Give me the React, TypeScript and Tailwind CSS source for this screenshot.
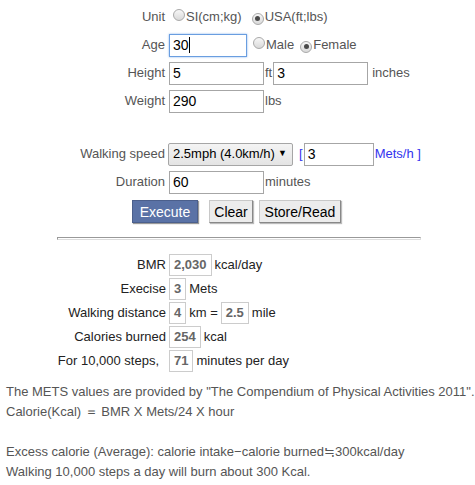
import React from "react";

const FONT = { fontFamily: '"Liberation Sans", Arial, sans-serif' };

function Radio({ checked }: { checked?: boolean }) {
  return (
    <span className="inline-flex items-center justify-center w-[12px] h-[12px] rounded-full border border-[#a9a9a9] bg-gradient-to-b from-[#f7f7f7] to-[#d9d9d9] shrink-0">
      {checked && <span className="w-[5px] h-[5px] rounded-full bg-[#4a4a4a]" />}
    </span>
  );
}

function Field({ value, w, focused }: { value: string; w: string; focused?: boolean }) {
  return (
    <div
      className={`${w} h-[23px] flex items-center px-[3px] bg-white text-[14px] text-black border ${
        focused ? "border-[#6a9ee0] shadow-[0_0_2px_#8ab4ec]" : "border-[#a6a6a6]"
      }`}
    >
      {value}
      {focused && <span className="w-px h-[16px] bg-black" />}
    </div>
  );
}

function Result({ value }: { value: string }) {
  return (
    <span className="h-[22px] flex items-center px-[4px] border border-[#cccccc] font-bold text-[#666]">
      {value}
    </span>
  );
}

function Btn({ children, primary, cls }: { children: React.ReactNode; primary?: boolean; cls: string }) {
  return (
    <button
      className={`h-[23px] text-[14px] leading-none ${cls} ${
        primary
          ? "bg-[#5a72a6] text-white border border-[#4b5f8c] shadow-[1px_1px_1px_#999]"
          : "bg-[#ececec] text-black border border-[#c8c8c8] border-r-[#888] border-b-[#888] shadow-[1px_1px_1px_#bbb]"
      }`}
    >
      {children}
    </button>
  );
}

export default function App() {
  return (
    <div className="w-[475px] h-[485px] bg-white text-[13px] overflow-hidden" style={FONT}>
      {/* input form */}
      <div className="grid grid-cols-[165px_1fr] gap-x-[4px] pt-[3px] text-[#555]">
        <div className="h-[28px] flex items-center justify-end">Unit</div>
        <div className="h-[28px] flex items-center">
          <span className="ml-[4px]"><Radio /></span>
          <span className="ml-[1px]">SI(cm;kg)</span>
          <span className="ml-[10px]"><Radio checked /></span>
          <span className="ml-[1px]">USA(ft;lbs)</span>
        </div>

        <div className="h-[28px] flex items-center justify-end">Age</div>
        <div className="h-[28px] flex items-center">
          <Field value="30" w="w-[78px]" focused />
          <span className="ml-[6px]"><Radio /></span>
          <span className="ml-[1px]">Male</span>
          <span className="ml-[6px]"><Radio checked /></span>
          <span className="ml-[1px]">Female</span>
        </div>

        <div className="h-[28px] flex items-center justify-end">Height</div>
        <div className="h-[28px] flex items-center">
          <Field value="5" w="w-[95px]" />
          <span className="ml-[1px]">ft</span>
          <span className="ml-[1px]"><Field value="3" w="w-[95px]" /></span>
          <span className="ml-[4px]">inches</span>
        </div>

        <div className="h-[28px] flex items-center justify-end">Weight</div>
        <div className="h-[28px] flex items-center">
          <Field value="290" w="w-[95px]" />
          <span className="ml-[1px]">lbs</span>
        </div>

        <div className="col-span-2 h-[25px]" />

        <div className="h-[28px] flex items-center justify-end">Walking speed</div>
        <div className="h-[28px] flex items-center -ml-[1px]">
          <div className="w-[125px] h-[23px] flex items-center justify-between pl-[4px] pr-[5px] text-[13px] whitespace-nowrap text-black bg-gradient-to-b from-[#f4f4f4] to-[#e4e4e4] border border-[#a6a6a6] rounded-[2px]">
            <span>2.5mph (4.0km/h)</span>
            <span className="text-[9px]">▼</span>
          </div>
          <span className="ml-[6px] text-[#3333ee]">[</span>
          <span className="ml-[1px]"><Field value="3" w="w-[70px]" /></span>
          <span className="ml-[1px] text-[#3333ee]">Mets/h ]</span>
        </div>

        <div className="h-[28px] flex items-center justify-end">Duration</div>
        <div className="h-[28px] flex items-center">
          <Field value="60" w="w-[95px]" />
          <span className="ml-[1px]">minutes</span>
        </div>
      </div>

      <div className="h-[31px] flex items-center justify-center pr-[2px]">
        <Btn primary cls="w-[66px]">Execute</Btn>
        <Btn cls="w-[44px] ml-[11px]">Clear</Btn>
        <Btn cls="w-[82px] ml-[6px]">Store/Read</Btn>
      </div>

      <div className="ml-[57px] mt-[10px] w-[364px] h-[3px] border border-t-[#999] border-l-[#999] border-r-[#ddd] border-b-[#ddd]" />

      {/* results */}
      <div className="grid grid-cols-[166px_1fr] gap-x-[3px] mt-[13px] text-[#222]">
        <div className="h-[24px] flex items-center justify-end">BMR</div>
        <div className="h-[24px] flex items-center gap-[3px]">
          <Result value="2,030" />
          <span>kcal/day</span>
        </div>

        <div className="h-[24px] flex items-center justify-end">Execise</div>
        <div className="h-[24px] flex items-center gap-[3px]">
          <Result value="3" />
          <span>Mets</span>
        </div>

        <div className="h-[24px] flex items-center justify-end">Walking distance</div>
        <div className="h-[24px] flex items-center gap-[3px]">
          <Result value="4" />
          <span>km =</span>
          <Result value="2.5" />
          <span>mile</span>
        </div>

        <div className="h-[24px] flex items-center justify-end">Calories burned</div>
        <div className="h-[24px] flex items-center gap-[3px]">
          <Result value="254" />
          <span>kcal</span>
        </div>

        <div className="h-[24px] flex items-center justify-end pr-[7px]">For 10,000 steps,</div>
        <div className="h-[24px] flex items-center gap-[3px]">
          <Result value="71" />
          <span>minutes per day</span>
        </div>
      </div>

      {/* notes */}
      <div className="mt-[9px] px-[6px] leading-[20px] text-[#555] whitespace-nowrap">
        <p>The METS values are provided by "The Compendium of Physical Activities 2011".</p>
        <p>Calorie(Kcal) ＝ BMR X Mets/24 X hour</p>
        <p>&nbsp;</p>
        <p>Excess calorie (Average): calorie intake−calorie burned≒300kcal/day</p>
        <p>Walking 10,000 steps a day will burn about 300 Kcal.</p>
      </div>
    </div>
  );
}
